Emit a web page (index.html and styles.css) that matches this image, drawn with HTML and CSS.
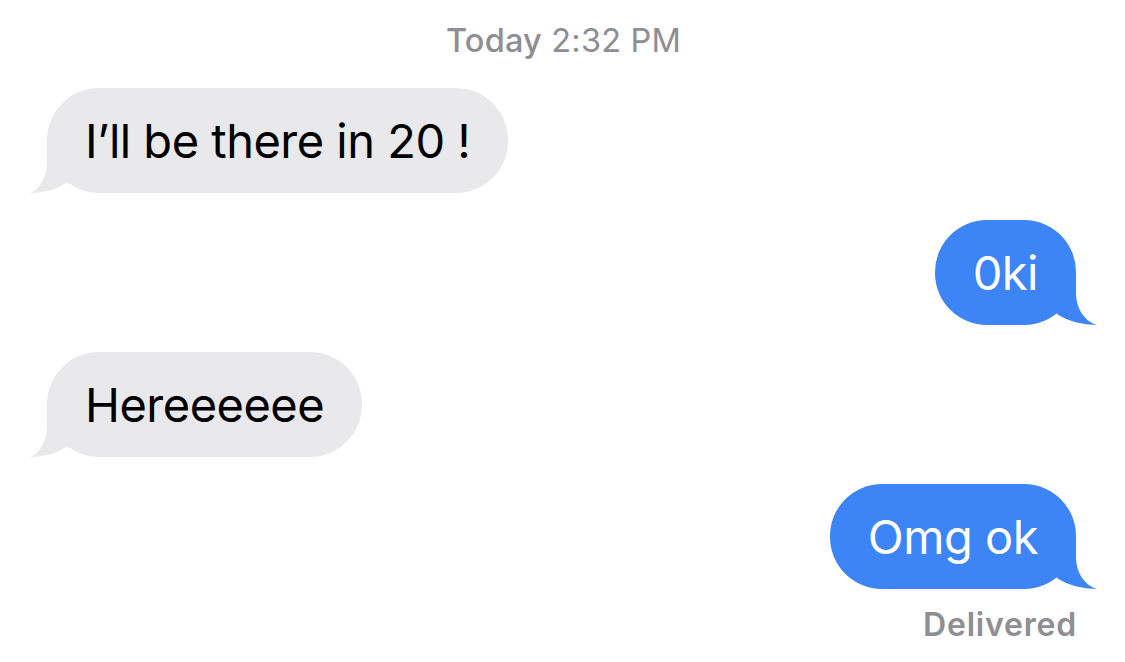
FILE: index.html
```html
<!DOCTYPE html>
<html lang="en">
<head>
<meta charset="utf-8">
<title>Messages</title>
<link rel="stylesheet" href="styles.css">
</head>
<body>
<main class="thread">
  <div class="stamp"><span class="stamp-day">Today</span> 2:32 PM</div>

  <div class="bubble received">
    <span class="text">I’ll be there in 20 !</span>
    <svg class="tail tail-left" viewBox="0 0 70 53" aria-hidden="true"><path d="M17 0 L17 20 C17 38 10 49 0 53 C14 53 28 49 37 42 L40 0 Z"/></svg>
  </div>

  <div class="bubble sent">
    <span class="text">0ki</span>
    <svg class="tail tail-right" viewBox="0 0 70 53" aria-hidden="true"><path d="M49 0 L49 20 C49 38 58 49 70 53 C56 53 40 49 30 42 L27 0 Z"/></svg>
  </div>

  <div class="bubble received">
    <span class="text">Hereeeeee</span>
    <svg class="tail tail-left" viewBox="0 0 70 53" aria-hidden="true"><path d="M17 0 L17 20 C17 38 10 49 0 53 C14 53 28 49 37 42 L40 0 Z"/></svg>
  </div>

  <div class="bubble sent">
    <span class="text">Omg ok</span>
    <svg class="tail tail-right" viewBox="0 0 70 53" aria-hidden="true"><path d="M49 0 L49 20 C49 38 58 49 70 53 C56 53 40 49 30 42 L27 0 Z"/></svg>
  </div>

  <div class="status">Delivered</div>
</main>
</body>
</html>
```

FILE: styles.css
```css
* { box-sizing: border-box; }

html, body {
  margin: 0;
  padding: 0;
  background: #ffffff;
}

body {
  font-family: Inter, "Noto Sans", "Liberation Sans", sans-serif;
  width: 1125px;
  height: 662px;
  overflow: hidden;
}

.thread {
  display: flex;
  flex-direction: column;
  padding: 21px 49px 0 47px;
}

.stamp {
  align-self: center;
  font-size: 32.5px;
  line-height: 40px;
  color: #8e8e93;
  font-weight: 400;
  letter-spacing: 0.2px;
  margin-left: 4px;
}

.stamp-day {
  font-weight: 500;
}

.bubble {
  position: relative;
  height: 105px;
  padding: 0 38px;
  border-radius: 52px;
  display: flex;
  align-items: center;
  font-size: 47px;
  line-height: 60px;
  letter-spacing: -0.5px;
}

.bubble .text {
  position: relative;
  z-index: 1;
}

.stamp + .bubble { margin-top: 27px; }
.bubble + .bubble { margin-top: 27px; }

.received {
  align-self: flex-start;
  background: #e9e9eb;
  color: #000000;
}

.sent {
  align-self: flex-end;
  background: #3d85f6;
  color: #ffffff;
}

.tail {
  position: absolute;
  bottom: 0;
  width: 70px;
  height: 53px;
}

.tail-left {
  left: -17px;
  fill: #e9e9eb;
}

.tail-right {
  right: -21px;
  fill: #3d85f6;
}

.status {
  align-self: flex-end;
  font-size: 32px;
  line-height: 36px;
  font-weight: 600;
  letter-spacing: 0.8px;
  color: #8e8e93;
  margin-top: 18px;
  margin-right: -1px;
}
```
